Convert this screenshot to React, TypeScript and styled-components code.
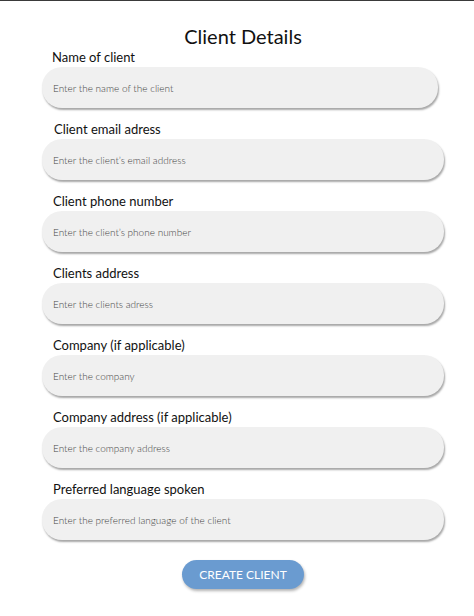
import React from "react";
import styled, { createGlobalStyle } from "styled-components";

const GlobalStyle = createGlobalStyle`
  body {
    margin: 0;
    background: #ffffff;
    font-family: Lato, "Open Sans", "Liberation Sans", sans-serif;
  }
`;

const Page = styled.div`
  border-top: 1px solid #3a3a3a;
  min-height: 615px;
  padding-left: 42px;
  padding-top: 23px;
  box-sizing: border-box;
`;

const Form = styled.form`
  width: 402px;
  display: flex;
  flex-direction: column;
  gap: 12px;
`;

const Title = styled.h1`
  margin: 0 0 -12px;
  font-size: 20px;
  line-height: 24px;
  font-weight: 400;
  text-align: center;
  color: #111;
`;

const Field = styled.div`
  display: flex;
  flex-direction: column;
`;

const Label = styled.label<{ $indent?: number }>`
  font-size: 13px;
  line-height: 18px;
  color: #111;
  padding-left: ${(p) => p.$indent ?? 11}px;
  margin-bottom: 1px;
`;

const Input = styled.input<{ $width?: number }>`
  width: ${(p) => p.$width ?? 402}px;
  height: 41px;
  box-sizing: border-box;
  border: none;
  outline: none;
  border-radius: 20px;
  background: #f0f0f0;
  box-shadow: 1px 2px 2px rgba(0, 0, 0, 0.35);
  padding: 0 11px;
  font-family: inherit;
  font-size: 10px;
  font-weight: 300;
  color: #333;

  &::placeholder {
    color: #444444;
  }
`;

const Submit = styled.button`
  align-self: center;
  margin-top: 8px;
  width: 122px;
  height: 29px;
  padding-top: 1px;
  border: none;
  border-radius: 15px;
  background: #6a9bd0;
  color: #ffffff;
  font-family: inherit;
  font-size: 12px;
  text-transform: uppercase;
  box-shadow: 1px 2px 3px rgba(0, 0, 0, 0.3);
  cursor: pointer;
`;

const fields = [
  { label: "Name of client", placeholder: "Enter the name of the client", width: 396, indent: 10 },
  { label: "Client email adress", placeholder: "Enter the client’s email address", indent: 12 },
  { label: "Client phone number", placeholder: "Enter the client’s phone number" },
  { label: "Clients address", placeholder: "Enter the clients adress" },
  { label: "Company (if applicable)", placeholder: "Enter the company" },
  { label: "Company address (if applicable)", placeholder: "Enter the company address" },
  { label: "Preferred language spoken", placeholder: "Enter the preferred language of the client" },
];

export default function App() {
  return (
    <>
      <GlobalStyle />
      <Page>
        <Form onSubmit={(e) => e.preventDefault()}>
          <Title>Client Details</Title>
          {fields.map((f, i) => (
            <Field key={f.label}>
              <Label htmlFor={`field-${i}`} $indent={f.indent}>
                {f.label}
              </Label>
              <Input id={`field-${i}`} placeholder={f.placeholder} $width={f.width} />
            </Field>
          ))}
          <Submit type="submit">Create client</Submit>
        </Form>
      </Page>
    </>
  );
}
